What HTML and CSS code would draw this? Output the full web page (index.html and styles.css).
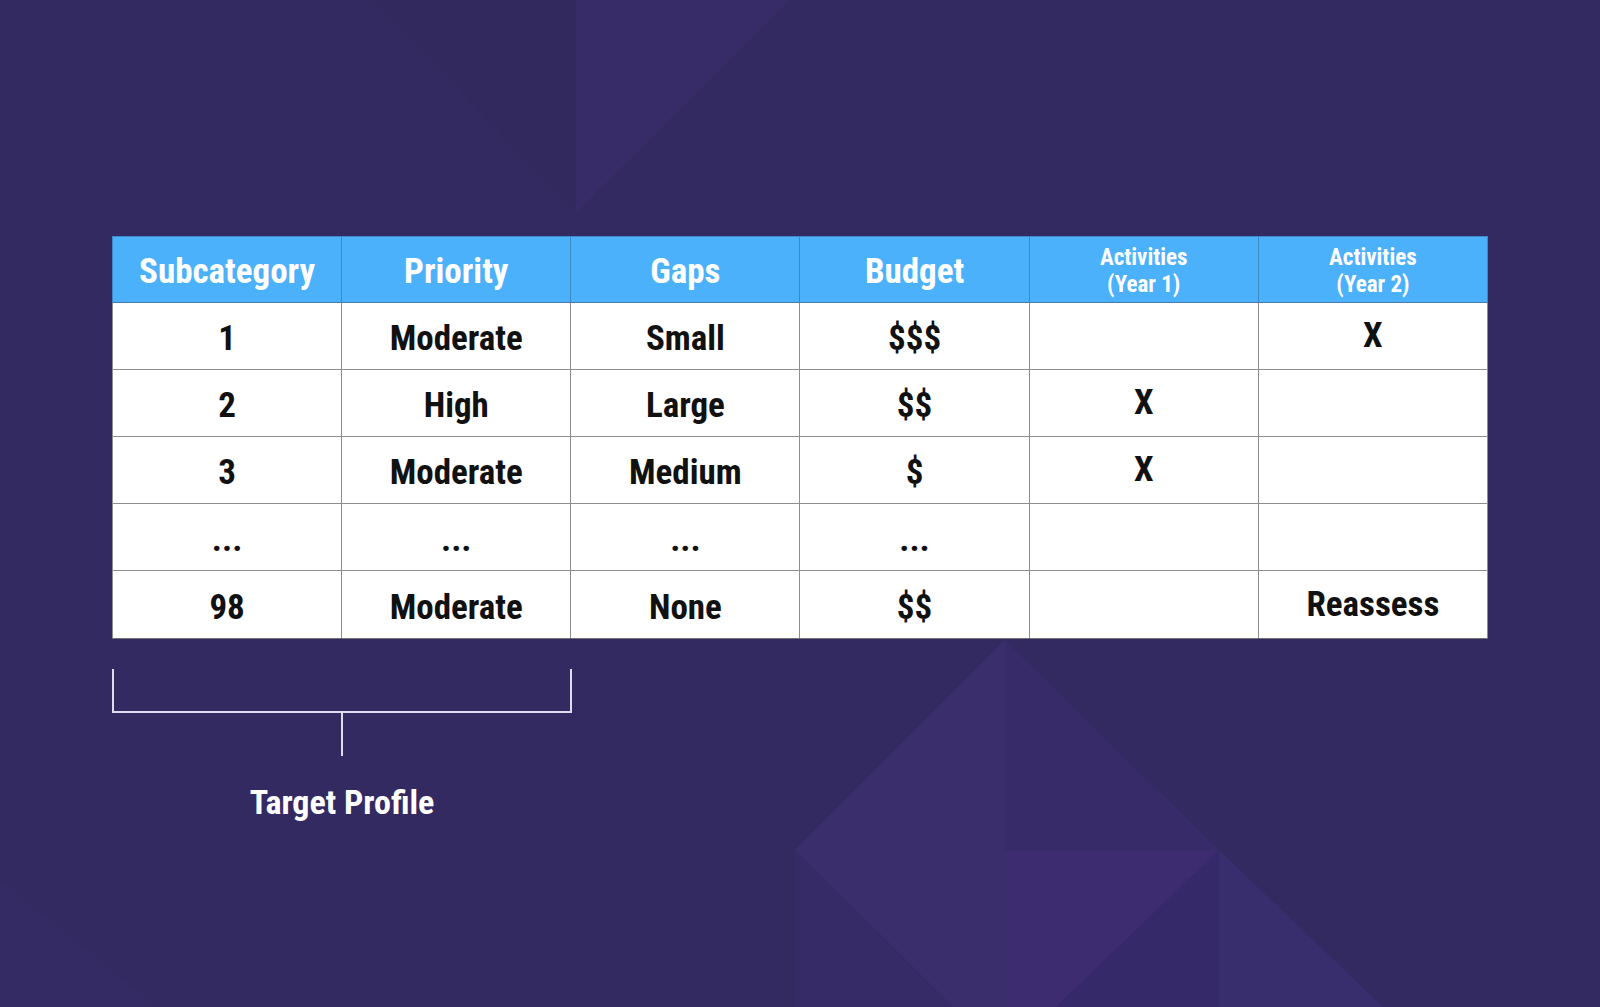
FILE: index.html
```html
<!DOCTYPE html>
<html>
<head>
<meta charset="utf-8">
<link rel="stylesheet" href="styles.css">
</head>
<body>
<div class="page">
  <svg class="bg" width="1600" height="1007" viewBox="0 0 1600 1007" aria-hidden="true">
    <rect width="1600" height="1007" fill="#332a62"/>
    <polygon points="375,0 576,0 576,213" fill="#32295f"/>
    <polygon points="576,0 790,0 576,213" fill="#372c68"/>
    <polygon points="1005,640 795,850 953,1007 1005,1007" fill="#3a2e6c"/>
    <polygon points="1005,640 1219,850 1005,850" fill="#372b6a"/>
    <polygon points="1005,850 1219,850 1056,1007 1005,1007" fill="#3d2d70"/>
    <polygon points="1219,850 1056,1007 1219,1007" fill="#36296a"/>
    <polygon points="1219,850 1219,1007 1383,1007" fill="#382e6e"/>
    <polygon points="795,850 953,1007 795,1007" fill="#362b67"/>
    <polygon points="0,880 158,1007 0,1007" fill="#342b64"/>
  </svg>
  <div class="content">
    <table class="grid">
      <thead>
        <tr>
          <th>Subcategory</th>
          <th>Priority</th>
          <th>Gaps</th>
          <th>Budget</th>
          <th class="small">Activities<br>(Year 1)</th>
          <th class="small">Activities<br>(Year 2)</th>
        </tr>
      </thead>
      <tbody>
        <tr>
          <td>1</td><td>Moderate</td><td>Small</td><td>$$$</td><td></td><td class="up">X</td>
        </tr>
        <tr>
          <td>2</td><td>High</td><td>Large</td><td>$$</td><td class="up">X</td><td></td>
        </tr>
        <tr>
          <td>3</td><td>Moderate</td><td>Medium</td><td>$</td><td class="up">X</td><td></td>
        </tr>
        <tr>
          <td>...</td><td>...</td><td>...</td><td>...</td><td></td><td></td>
        </tr>
        <tr class="last">
          <td>98</td><td>Moderate</td><td>None</td><td>$$</td><td></td><td class="up">Reassess</td>
        </tr>
      </tbody>
    </table>
    <div class="target">
      <div class="bracket"></div>
      <div class="stem"></div>
      <div class="label">Target Profile</div>
    </div>
  </div>
</div>
</body>
</html>
```
FILE: styles.css
```css
html, body {
  margin: 0;
  padding: 0;
  background: #332a62;
}

.page {
  position: relative;
  width: 1600px;
  height: 1007px;
  overflow: hidden;
  font-family: "Roboto Condensed", "Roboto", sans-serif;
  font-stretch: condensed;
  font-weight: 700;
}

.bg {
  position: absolute;
  left: 0;
  top: 0;
  display: block;
}

.content {
  position: relative;
  padding: 236px 0 0 112px;
}

.grid {
  border-collapse: collapse;
  table-layout: fixed;
  width: 1376px;
  border: 1px solid #6f6f78;
}

.grid th,
.grid td {
  box-sizing: border-box;
}

.grid th {
  background: #4cb1fb;
  color: #fff;
  font-size: 35px;
  font-weight: 700;
  height: 66px;
  padding: 3px 0 0;
  text-align: center;
  vertical-align: middle;
  border: 1px solid #3f88c8;
  border-bottom-color: #4a7aa8;
}

.grid th.small {
  font-size: 23px;
  line-height: 27px;
  padding: 2px 0 0;
}

.grid td {
  background: #fff;
  color: #111;
  font-size: 35px;
  font-weight: 700;
  height: 67px;
  padding: 5px 0 0;
  text-align: center;
  vertical-align: middle;
  border: 1px solid #8e8e8e;
}

.grid tr.last td {
  height: 68px;
  border-bottom-color: #6f6f78;
}

.grid td.up {
  padding: 0 0 1px;
}

.target {
  width: 460px;
  margin-top: 30px;
}

.bracket {
  height: 44px;
  box-sizing: border-box;
  border: 2px solid #dedcef;
  border-top: none;
}

.stem {
  width: 2px;
  height: 43px;
  margin: 0 auto;
  background: #dedcef;
}

.label {
  margin-top: 26px;
  color: #fff;
  font-size: 34px;
  line-height: 41px;
  text-align: center;
}
```
